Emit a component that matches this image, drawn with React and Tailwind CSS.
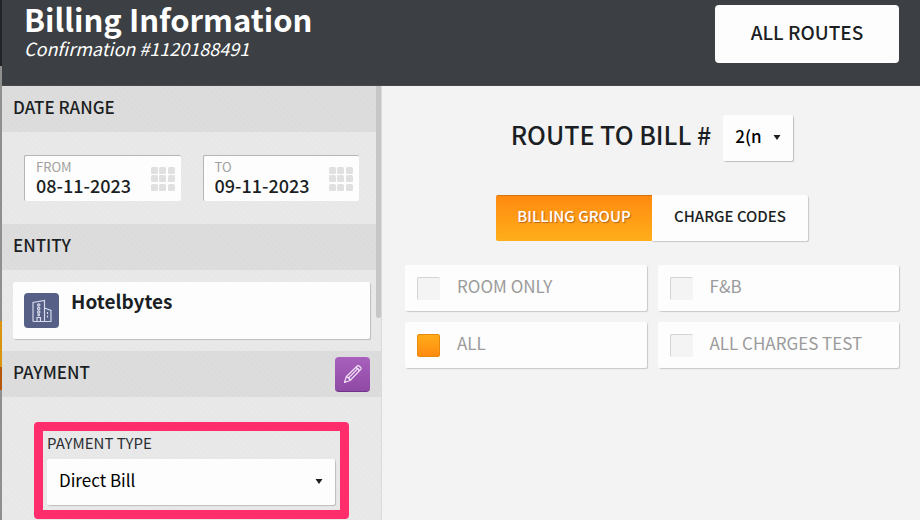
import { useState } from 'react';

const chargeGroups = [
    { id: 'room-only', label: 'ROOM ONLY' },
    { id: 'fnb', label: 'F&B' },
    { id: 'all', label: 'ALL' },
    { id: 'all-charges-test', label: 'ALL CHARGES TEST' },
];

const App = () => {
    const [tab, setTab] = useState('groups');
    const [dates, setDates] = useState({ from: '08-11-2023', to: '09-11-2023' });
    const [selected, setSelected] = useState(['all']);

    const handleDate = (e) => {
        const { name, value } = e.target;
        setDates((prev) => ({ ...prev, [name]: value }));
    };

    const toggleGroup = (id) => {
        setSelected((prev) => (prev.includes(id) ? prev.filter((item) => item !== id) : [...prev, id]));
    };

    return (
        <div className="min-h-screen flex bg-[#f3f3f3] text-[#1b1f24] font-['Noto_Sans_CJK_SC',sans-serif]">
            {/* Edge of the page behind the panel */}
            <div className="w-0.5 shrink-0 bg-[linear-gradient(#202428_0_66px,#8f8f8f_66px_321px,#d99512_321px_367px,#b4580c_367px_390px,#8f8f8f_390px)]"></div>

            <div className="flex-1 min-w-0 flex flex-col">
                <header className="flex items-start justify-between pl-[22px] pr-[21px] bg-[#3c3f43] border-b border-[#4a4846]">
                    <div>
                        <h1 className="text-[31px] leading-[38px] font-bold text-white">Billing Information</h1>
                        <p className="text-[18px] leading-5 italic text-white">Confirmation #1120188491</p>
                    </div>
                    <button type="button" className="mt-[5px] mb-[22px] w-[184px] h-[58px] pb-1 rounded-sm bg-[#fdfdfd] text-[19px] font-medium">ALL ROUTES</button>
                </header>

                <div className="flex-1 flex">
                    <aside className="relative w-2/5 min-w-[380px] shrink-0 bg-[repeating-linear-gradient(45deg,#e9e9e9_0_2px,#e7e7e7_2px_4px)] border-r border-[#dadada]">
                        <SectionTitle>DATE RANGE</SectionTitle>
                        <div className="grid grid-cols-2 gap-[22px] px-[22px] py-[23px]">
                            <DateField name="from" label="FROM" value={dates.from} onChange={handleDate} />
                            <DateField name="to" label="TO" value={dates.to} onChange={handleDate} />
                        </div>

                        <SectionTitle>ENTITY</SectionTitle>
                        <div className="px-[11px] py-3">
                            <div className="flex gap-3 h-[57px] px-[11px] pt-[11px] rounded-xs bg-[#fdfdfd] shadow-[1px_1px_1px_#bdbdbd]">
                                <span className="w-[35px] h-[35px] rounded-sm bg-[#565f86] flex items-center justify-center">
                                    <BuildingIcon />
                                </span>
                                <strong className="text-[19px] leading-4 font-bold">Hotelbytes</strong>
                            </div>
                        </div>

                        <SectionTitle
                            action={
                                <button type="button" aria-label="Edit payment" className="w-[35px] h-[35px] rounded-sm bg-linear-to-b from-[#a861bd] to-[#8f4aa5] border-b border-[#71338a] flex items-center justify-center">
                                    <PencilIcon />
                                </button>
                            }
                        >
                            PAYMENT
                        </SectionTitle>
                        <div className="px-8 pt-[25px]">
                            <div className="border-9 border-[#ff2d6c] rounded-sm pl-1 pr-[5px] pb-[5px]">
                                <label htmlFor="payment-type" className="block text-[15px] leading-6 pb-1 text-[#2b2f34]">PAYMENT TYPE</label>
                                <SelectBox id="payment-type" className="w-full text-[17px] pl-3">
                                    <option>Direct Bill</option>
                                </SelectBox>
                            </div>
                        </div>

                        {/* Scroll thumb */}
                        <div className="absolute top-0 right-0 w-[5px] h-[232px] rounded-b-full bg-[#c6c6c6]"></div>
                    </aside>

                    <main className="flex-1 min-w-0 pl-[23px] pr-[21px] pt-[29px]">
                        <div className="flex items-center justify-center gap-3">
                            <label htmlFor="bill-number" className="text-[25px] leading-8 font-medium pb-2">ROUTE TO BILL #</label>
                            <SelectBox id="bill-number" className="w-[70px] text-[17px] font-medium pl-3">
                                <option>2(n</option>
                            </SelectBox>
                        </div>

                        <div className="flex justify-center mt-[34px]">
                            <TabButton active={tab === 'groups'} onClick={() => setTab('groups')}>BILLING GROUP</TabButton>
                            <TabButton active={tab === 'codes'} onClick={() => setTab('codes')}>CHARGE CODES</TabButton>
                        </div>

                        <div className="grid grid-cols-2 gap-[11px] mt-6">
                            {chargeGroups.map((group) => (
                                <label key={group.id} className="flex items-center gap-[17px] h-[46px] px-3 rounded-xs bg-[#fdfdfd] shadow-[1px_1px_1px_#c8c8c8] text-[17px] leading-6 text-[#9b9b9b]">
                                    <input type="checkbox" checked={selected.includes(group.id)} onChange={() => toggleGroup(group.id)}
                                        className="appearance-none w-[23px] h-[23px] shrink-0 rounded-xs bg-[#f4f4f4] border-t border-l border-[#d4d4d4] checked:bg-linear-to-b checked:from-[#ffac18] checked:to-[#ff8a10] checked:border checked:border-[#e58a0c]" />
                                    <span className="pb-1">{group.label}</span>
                                </label>
                            ))}
                        </div>
                    </main>
                </div>
            </div>
        </div>
    );
};

const SectionTitle = ({ children, action }) => (
    <div className="flex items-center justify-between h-[46px] px-[11px] bg-black/5">
        <h2 className="text-[17px] leading-6 font-medium pb-1">{children}</h2>
        {action}
    </div>
);

const DateField = ({ name, label, value, onChange }) => (
    <div className="flex items-center justify-between h-[46px] pl-[11px] pr-1.5 rounded-xs bg-[#fdfdfd] border-t border-l border-[#b5b5b5]">
        <div className="min-w-0 pb-1">
            <label htmlFor={name} className="block text-[13px] leading-4 text-[#a0a0a0]">{label}</label>
            <input type="text" id={name} name={name} value={value} onChange={onChange}
                className="block w-full bg-transparent text-[18px] leading-5 font-medium outline-none" />
        </div>
        <svg className="w-6 h-6 shrink-0" viewBox="0 0 24 24" fill="#e0e0e0">
            {[0, 8, 17].map((y) => [0, 8, 17].map((x) => (
                <rect key={`${x}-${y}`} x={x} y={y} width="7" height="7" rx="1.5" />
            )))}
        </svg>
    </div>
);

const SelectBox = ({ id, className, children }) => (
    <div className="relative">
        <select id={id} className={`appearance-none block h-[46px] pb-1 rounded-xs bg-[#fdfdfd] text-black shadow-[1px_1px_1px_#bdbdbd] outline-none ${className}`}>
            {children}
        </select>
        <svg className="absolute top-[18px] right-3 w-2 h-2 pointer-events-none" viewBox="0 0 8 8" fill="#1b1f24">
            <path d="M.5 2h7L4 7z" />
        </svg>
    </div>
);

const TabButton = ({ active, onClick, children }) => (
    <button type="button" onClick={onClick}
        className={`w-[156px] h-[46px] pb-1 text-[15px] font-medium ${active
            ? 'rounded-l-xs bg-linear-to-b from-[#ff8a10] to-[#ffae1a] border-t border-[#d9720c] text-white [text-shadow:1px_1px_1px_#b5651d]'
            : 'rounded-r-xs bg-[#fdfdfd] shadow-[1px_1px_1px_#c8c8c8]'}`}>
        {children}
    </button>
);

const BuildingIcon = () => (
    <svg className="w-5 h-6" viewBox="0 0 20 24" fill="none" stroke="#d5d9ea" strokeWidth="1.2">
        <path d="M1 22.500V3.500L12.500 1.500v21M1 22.500h18.500M12.500 9l6.500 2.500v11M5 22.500v-4h3.500v4" />
        <circle cx="6.700" cy="6" r="1.200" />
        <circle cx="6.700" cy="9.500" r="1.200" />
        <circle cx="6.700" cy="13" r="1.200" />
        <circle cx="6.700" cy="16" r=".8" />
        <path d="M15.500 13v7" strokeDasharray="2 1.500" />
    </svg>
);

const PencilIcon = () => (
    <svg className="w-5 h-5" viewBox="0 0 20 20" fill="none" stroke="#f3e4f7" strokeWidth="1.2" strokeLinejoin="round">
        <path d="M1.500 18.500l1.700-5.700L14.500 1.800c1-.9 4.400 2.200 3.500 3.300L7 16.500zM3.200 12.800c1.800.3 3.500 1.900 3.800 3.700M12.500 3.700c1.800.3 3.500 2 3.700 3.500M5 14.500l9.300-9.300" />
    </svg>
);

export default App;
